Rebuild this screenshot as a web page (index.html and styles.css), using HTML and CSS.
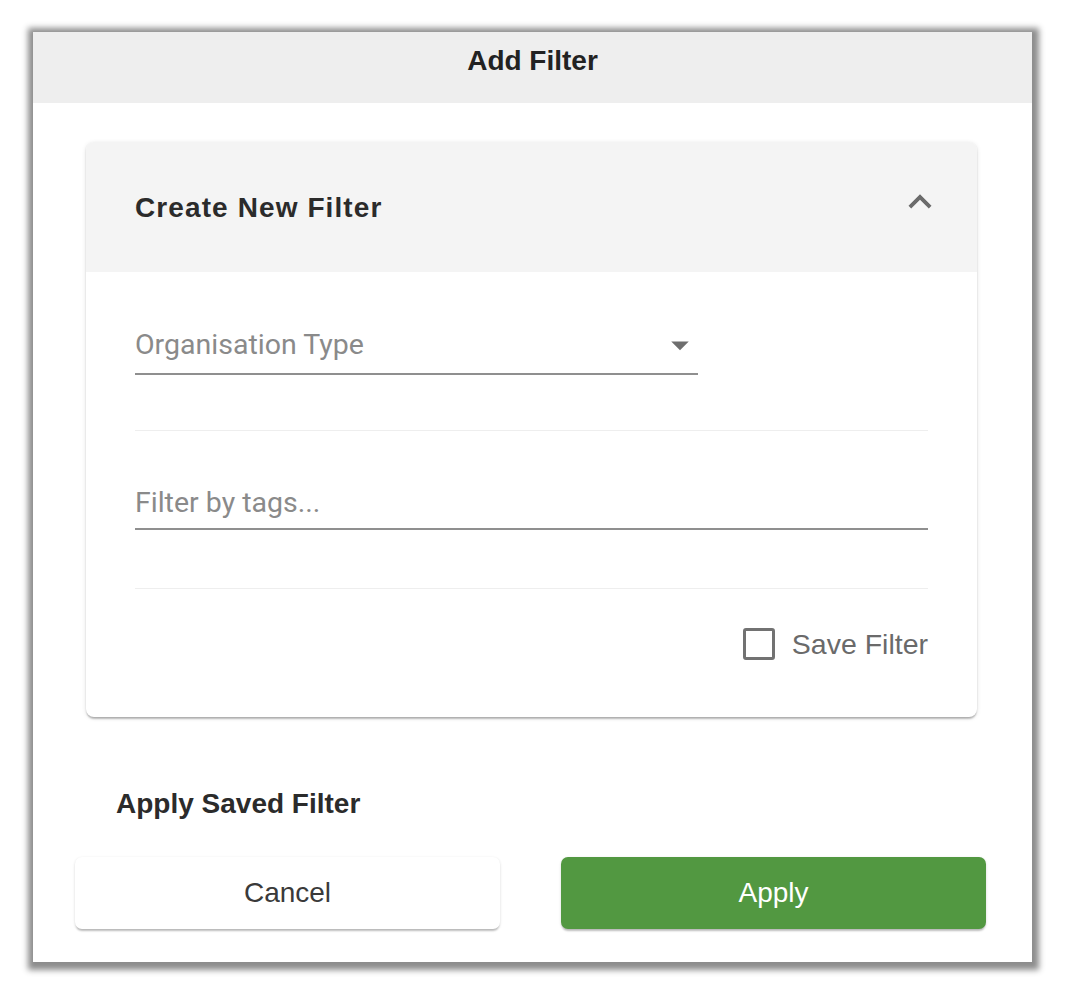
FILE: index.html
```html
<!DOCTYPE html>
<html lang="en">
<head>
  <meta charset="UTF-8">
  <meta name="viewport" content="width=device-width, initial-scale=1.0">
  <title>Add Filter</title>
  <link rel="stylesheet" href="styles.css">
</head>
<body>
<div class="dialog">
  <div class="dialog-title">Add Filter</div>

  <div class="dialog-content">
    <div class="panel">
      <div class="panel-header">
        <span class="panel-title">Create New Filter</span>
        <svg class="chevron" viewBox="0 0 24 24" width="46" height="46">
          <path d="M12 8l-6 6 1.41 1.41L12 10.83l4.59 4.58L18 14z"></path>
        </svg>
      </div>

      <div class="panel-body">
        <div class="field select-field">
          <span class="placeholder">Organisation Type</span>
          <svg class="arrow" viewBox="0 0 24 24" width="42" height="42">
            <path d="M7 10l5 5 5-5z"></path>
          </svg>
        </div>

        <hr class="divider">

        <div class="field tags-field">
          <span class="placeholder">Filter by tags...</span>
        </div>

        <hr class="divider divider-low">

        <label class="save-row">
          <span class="checkbox"></span>
          <span class="save-label">Save Filter</span>
        </label>
      </div>
    </div>

    <h3 class="saved-title">Apply Saved Filter</h3>
  </div>

  <div class="dialog-actions">
    <button class="btn btn-cancel">Cancel</button>
    <button class="btn btn-apply">Apply</button>
  </div>
</div>
</body>
</html>
```

FILE: styles.css
```css
body {
    margin: 0;
    padding: 32px 0 28px 33px;
    background: #fff;
    font-family: "Liberation Sans", Arial, sans-serif;
}
.dialog {
    width: 999px;
    height: 930px;
    background: #fff;
    box-shadow: 1px 2px 6px 6px rgba(0, 0, 0, 0.45);
    display: flex;
    flex-direction: column;
}
.dialog-title {
    flex: none;
    height: 71px;
    box-sizing: border-box;
    padding-top: 13px;
    background: #eeeeee;
    text-align: center;
    font-size: 28px;
    font-weight: bold;
    line-height: 32px;
    color: #222;
}
.dialog-content {
    padding: 39px 55px 0 53px;
}
.panel {
    height: 575px;
    border-radius: 8px;
    background: #fff;
    box-shadow: 0 3px 2px -1px rgba(0, 0, 0, 0.2), 0 1px 2px rgba(0, 0, 0, 0.12), 0 1px 5px rgba(0, 0, 0, 0.1);
    overflow: hidden;
}
.panel-header {
    height: 130px;
    background: #f4f4f4;
    display: flex;
    align-items: center;
    justify-content: space-between;
    padding: 0 34px 0 49px;
}
.panel-title {
    font-size: 28px;
    font-weight: bold;
    letter-spacing: 1.1px;
    color: #2b2b2b;
    margin-top: 2px;
}
.chevron {
    fill: #6b6b6b;
    margin-top: -10px;
}
.panel-body {
    padding: 0 49px;
}
.field {
    font-family: Roboto, "Liberation Sans", sans-serif;
    font-size: 28.5px;
    line-height: 34px;
    color: #8a8a8a;
    border-bottom: 2px solid #8f8f8f;
    display: flex;
    align-items: center;
}
.select-field {
    width: 563px;
    margin-top: 56px;
    padding-bottom: 11px;
    justify-content: space-between;
}
.arrow {
    fill: #6e6e6e;
    margin: -4px -3px -4px 0;
}
.tags-field {
    margin-top: 55px;
    padding-bottom: 8px;
}
.divider {
    border: none;
    border-top: 1px solid #eeeeee;
    margin: 55px 0 0;
}
.divider-low {
    margin-top: 58px;
}
.save-row {
    margin-top: 39px;
    height: 32px;
    display: flex;
    justify-content: flex-end;
    align-items: center;
    gap: 17px;
}
.checkbox {
    width: 26px;
    height: 26px;
    border: 3px solid #727272;
    border-radius: 3px;
}
.save-label {
    font-size: 28.5px;
    color: #6a6a6a;
}
.saved-title {
    margin: 72px 0 0 30px;
    font-size: 28px;
    line-height: 30px;
    color: #2b2b2b;
}
.dialog-actions {
    display: flex;
    gap: 61px;
    padding: 38px 46px 0 42px;
}
.btn {
    flex: 1;
    height: 72px;
    border: none;
    border-radius: 7px;
    font-family: "Liberation Sans", Arial, sans-serif;
    font-size: 28px;
    cursor: pointer;
    box-shadow: 0 3px 2px -1px rgba(0, 0, 0, 0.2), 0 1px 3px rgba(0, 0, 0, 0.14);
}
.btn-cancel {
    background: #fff;
    color: #3a3a3a;
}
.btn-apply {
    background: #529841;
    color: #fff;
}
```
